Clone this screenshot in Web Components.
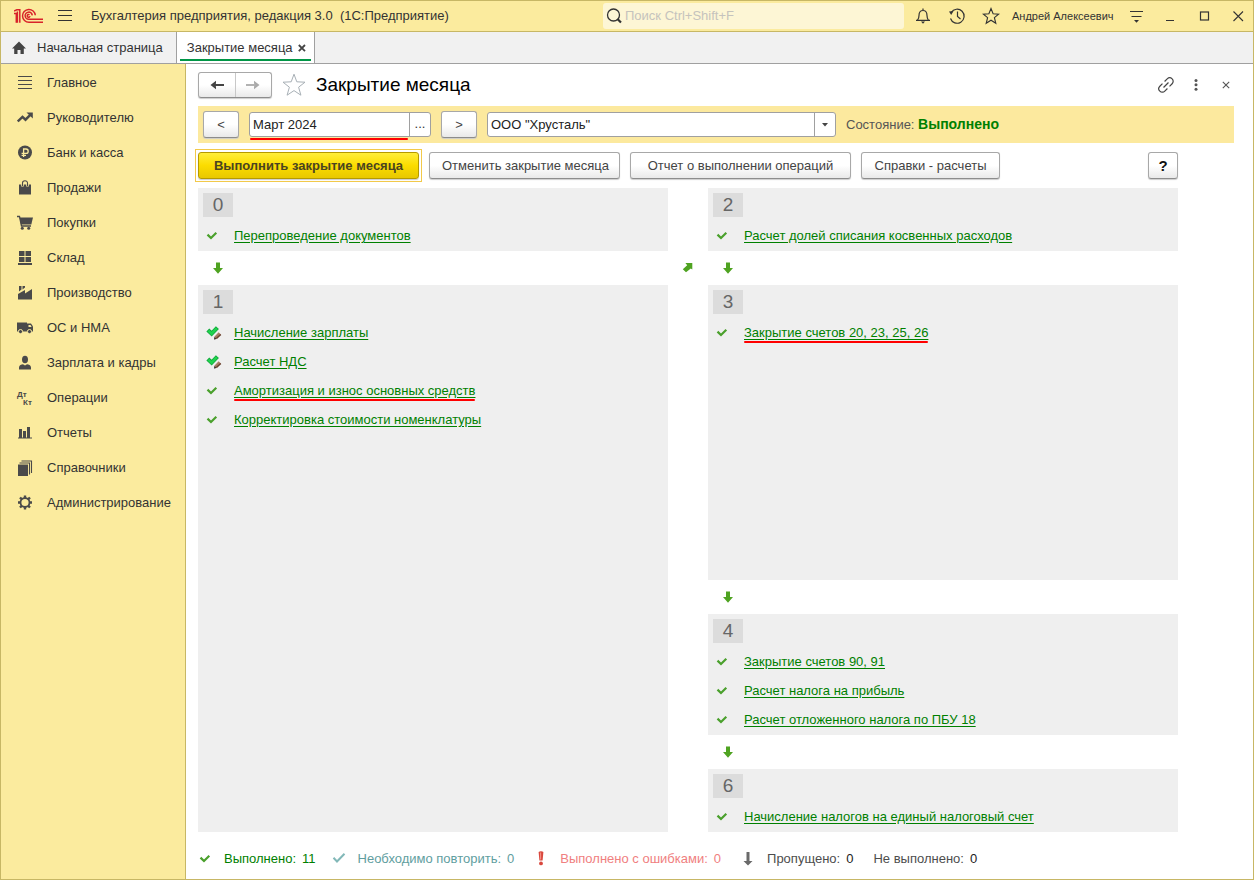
<!DOCTYPE html>
<html lang="ru">
<head>
<meta charset="utf-8">
<meta name="viewport" content="width=device-width, initial-scale=1">
<title>Закрытие месяца</title>
<style>
  body { margin: 0; font: 13px/16px "Liberation Sans", Arial, sans-serif; color: #333; background: #fff; }
</style>
</head>
<body>
<app-window>
  <title-bar slot="title" user="Андрей Алексеевич">Бухгалтерия предприятия, редакция 3.0&nbsp; (1С:Предприятие)</title-bar>
  <tab-strip slot="tabs">
    <tab-item icon="home">Начальная страница</tab-item>
    <tab-item active>Закрытие месяца</tab-item>
  </tab-strip>
  <side-nav slot="nav">
    <nav-item icon="lines">Главное</nav-item>
    <nav-item icon="trend">Руководителю</nav-item>
    <nav-item icon="ruble">Банк и касса</nav-item>
    <nav-item icon="bag">Продажи</nav-item>
    <nav-item icon="cart">Покупки</nav-item>
    <nav-item icon="store">Склад</nav-item>
    <nav-item icon="factory">Производство</nav-item>
    <nav-item icon="truck">ОС и НМА</nav-item>
    <nav-item icon="person">Зарплата и кадры</nav-item>
    <nav-item icon="dtkt">Операции</nav-item>
    <nav-item icon="chart">Отчеты</nav-item>
    <nav-item icon="books">Справочники</nav-item>
    <nav-item icon="gear">Администрирование</nav-item>
  </side-nav>
  <page-header>Закрытие месяца</page-header>
  <period-bar></period-bar>
  <command-bar>
    <ui-button kind="primary">Выполнить закрытие месяца</ui-button>
    <ui-button style="--w:191px">Отменить закрытие месяца</ui-button>
    <ui-button style="--w:221px">Отчет о выполнении операций</ui-button>
    <ui-button style="--w:139px">Справки - расчеты</ui-button>
    <ui-button slot="end" kind="help">?</ui-button>
  </command-bar>
  <stage-board>
    <stage-panel slot="left" number="0">
      <op-item>Перепроведение документов</op-item>
    </stage-panel>
    <stage-arrow slot="left"></stage-arrow>
    <stage-panel slot="left" number="1" grow>
      <op-item icon="checkEdit">Начисление зарплаты</op-item>
      <op-item icon="checkEdit">Расчет НДС</op-item>
      <op-item marked>Амортизация и износ основных средств</op-item>
      <op-item>Корректировка стоимости номенклатуры</op-item>
    </stage-panel>
    <stage-panel slot="right" number="2">
      <op-item>Расчет долей списания косвенных расходов</op-item>
    </stage-panel>
    <stage-arrow slot="right"></stage-arrow>
    <stage-panel slot="right" number="3" grow>
      <op-item marked>Закрытие счетов 20, 23, 25, 26</op-item>
    </stage-panel>
    <stage-arrow slot="right"></stage-arrow>
    <stage-panel slot="right" number="4">
      <op-item>Закрытие счетов 90, 91</op-item>
      <op-item>Расчет налога на прибыль</op-item>
      <op-item>Расчет отложенного налога по ПБУ 18</op-item>
    </stage-panel>
    <stage-arrow slot="right"></stage-arrow>
    <stage-panel slot="right" number="6">
      <op-item>Начисление налогов на единый налоговый счет</op-item>
    </stage-panel>
  </stage-board>
  <status-legend>
    <legend-item icon="check" count="11" style="--c:#008000;--n:#008000">Выполнено:</legend-item>
    <legend-item icon="checkBlue" count="0" style="--c:#5f9ea0;--n:#5f9ea0">Необходимо повторить:</legend-item>
    <legend-item icon="bang" count="0" style="--c:#f08080;--n:#f08080">Выполнено с ошибками:</legend-item>
    <legend-item icon="downGray" count="0" style="--c:#4d4d4d;--n:#222">Пропущено:</legend-item>
    <legend-item count="0" style="--c:#4d4d4d;--n:#222">Не выполнено:</legend-item>
  </status-legend>
</app-window>

<script>
const G = '#4a4a4a';
const icons = {
  logo: [30, 16, '<g fill="none" stroke="#d8232a" stroke-width="1.5"><path d="M0 5.5H2.3V14.7"/><path d="M0 3L2.8 1.7H5.8V14.7M3.4 3.5V14.7"/><path d="M21.3 7.3A6.4 6.4 0 1 0 15 14.2H29"/><path d="M18.3 7.3A3.6 3.6 0 1 0 15 11.3H29"/><path d="M16 8.2A1.4 1.4 0 1 1 15.5 6.8"/></g>'],
  menu: [16, 14, '<path d="M1 1.5H15M1 6.5H15M1 11.5H15" stroke="#333"/>'],
  search: [16, 16, '<circle cx="7.5" cy="7" r="6" fill="none" stroke="#333" stroke-width="1.3"/><path d="M11.5 11L15 14.5" stroke="#333" stroke-width="2.2"/>'],
  bell: [18, 18, '<path d="M9 1.5V3.2M2 13.3H16M3.5 13C5 11.5 5 10.5 5 8.5C5 5.5 6.5 3.5 9 3.5S13 5.5 13 8.5C13 10.5 13 11.5 14.5 13.3" fill="none" stroke="#333" stroke-width="1.2"/><path d="M7 14.5H11L9 16.8Z" fill="#333"/>'],
  history: [18, 18, '<path d="M3.2 5.5A7 7 0 1 1 2.5 11.5M9.5 4.5V9.5L12.5 12" fill="none" stroke="#333" stroke-width="1.2"/><path d="M1 4.5L5.5 4L3.2 8Z" fill="#333"/>'],
  star: [18, 18, '<path d="M9 1.5L11.1 6.8L16.6 7.2L12.4 10.7L13.8 16.3L9 13.2L4.2 16.3L5.6 10.7L1.4 7.2L6.9 6.8Z" fill="none" stroke="#333" stroke-width="1.1"/>'],
  starBig: [24, 24, '<path d="M12 1.2L14.8 8.8L23 9.2L16.6 14.2L18.9 22.2L12 17.6L5.1 22.2L7.4 14.2L1 9.2L9.2 8.8Z" fill="#fff" stroke="#a8b0b6"/>'],
  menuDown: [14, 14, '<path d="M1 2.5H14M2.5 7.5H12.5" stroke="#333" stroke-width="1.2"/><path d="M5 11H10L7.5 13.8Z" fill="#333"/>'],
  minimize: [14, 14, '<path d="M3 11.5H11" stroke="#333"/>'],
  maximize: [14, 14, '<rect x="3.5" y="3" width="8" height="8" fill="none" stroke="#333" stroke-width="1.2"/>'],
  close: [14, 14, '<path d="M2.5 2.5L12 12M12 2.5L2.5 12" stroke="#333" stroke-width="1.1"/>'],
  closeTab: [10, 10, '<path d="M1.8 2L8 8.2M8 2L1.8 8.2" stroke="#444" stroke-width="1.8"/>'],
  closePage: [10, 10, '<path d="M1.8 1.8L8.2 8.2M8.2 1.8L1.8 8.2" stroke="#555" stroke-width="1.1"/>'],
  home: [16, 14, '<path d="M8 .6L15 7.4H12.8V13H9.5V9H6.5V13H3.2V7.4H1Z" fill="#444"/>'],
  chain: [18, 18, '<g fill="none" stroke="#444" stroke-width="1.2" transform="rotate(-45 9 9)"><path d="M7.5 5.5H3.8A3.5 3.5 0 0 0 3.8 12.5H7.5M10.5 5.5H14.2A3.5 3.5 0 0 1 14.2 12.5H10.5M5.5 9H12.5"/></g>'],
  dots: [6, 14, '<g fill="#555"><circle cx="3" cy="2.4" r="1.5"/><circle cx="3" cy="6.8" r="1.5"/><circle cx="3" cy="11.2" r="1.5"/></g>'],
  back: [16, 12, '<path d="M15 6H4" stroke="#444" stroke-width="2"/><path d="M1.5 6L7 1.8V4.4L5.5 6L7 7.6V10.2Z" fill="#444"/>'],
  forward: [16, 12, '<path d="M1 6H12" stroke="#aaa" stroke-width="1.8"/><path d="M14.5 6L9 1.8V4.4L10.5 6L9 7.6V10.2Z" fill="#aaa"/>'],
  caret: [6, 4, '<path d="M0 0H6L3 3.5Z" fill="#444"/>'],
  lines: [16, 16, `<path d="M1 1.5H15M1 5.5H15M1 9.5H15M1 13.5H15" stroke="${G}"/>`],
  trend: [16, 16, `<path d="M.8 11.5L5.5 6.9L8.5 9.7L13.3 4.8" fill="none" stroke="${G}" stroke-width="2.4"/><path d="M9.5 2.5H15.8V8.6Z" fill="${G}"/>`],
  ruble: [16, 16, `<circle cx="8" cy="7.5" r="7" fill="${G}"/><path d="M6.6 12V4H9A2.2 2.2 0 0 1 9 8.4H4.6M4.6 10.3H9" fill="none" stroke="#fbeb9e" stroke-width="1.3"/>`],
  bag: [16, 16, `<path d="M2 4.5H14V14.5H2Z" fill="${G}"/><path d="M5.5 6.5V3A2.5 2.2 0 0 1 10.5 3V6.5" fill="none" stroke="#fbeb9e" stroke-width="2.6"/><path d="M5.5 6V3A2.5 2.2 0 0 1 10.5 3V6" fill="none" stroke="${G}" stroke-width="1.1"/>`],
  cart: [18, 16, `<path d="M1 1.5H3.5L5.5 11H15" fill="none" stroke="${G}" stroke-width="1.3"/><path d="M3.6 2.5H17L15.3 9.5H5Z" fill="${G}"/><circle cx="6.3" cy="13.2" r="1.5" fill="${G}"/><circle cx="12.7" cy="13.2" r="1.5" fill="${G}"/>`],
  store: [16, 16, `<path d="M2 1H7.5V6H2ZM8.5 1H14V6H8.5ZM2 7H7.5V12H2ZM8.5 7H14V12H8.5ZM1 13H15V15H1Z" fill="${G}"/>`],
  factory: [16, 16, `<path d="M1 14.5V9L8 5V8.5L15 4V14.5Z" fill="${G}"/><path d="M2 1H4.5V4.5L2 6.5ZM5.5 1H8V2.5L5.5 4.5Z" fill="${G}"/>`],
  truck: [18, 16, `<path d="M1 2.5H11V11.5H1Z" fill="${G}"/><path d="M11 3.5H15L17 6.5V11.5H11Z" fill="${G}"/><path d="M12.5 5H14.5L15.6 7H12.5Z" fill="#fbeb9e"/><g fill="${G}" stroke="#fbeb9e"><circle cx="4.5" cy="11.6" r="2.1"/><circle cx="13.5" cy="11.6" r="2.1"/></g>`],
  person: [16, 16, `<ellipse cx="8" cy="4.5" rx="3" ry="3.8" fill="${G}"/><path d="M2 14.5V12.5C2 10.3 4.5 9.5 6 9.3L8 10.5L10 9.3C11.5 9.5 14 10.3 14 12.5V14.5Z" fill="${G}"/>`],
  dtkt: [18, 16, `<g fill="${G}" font-family="Liberation Sans,Arial,sans-serif" font-weight="bold" font-size="8"><text x="1" y="6.5">Дт</text><text x="7" y="14.5">Кт</text></g>`],
  chart: [16, 16, `<path d="M2 4H5V12.5H2ZM6 6H9V12.5H6ZM10 2H13V12.5H10ZM1 12.5H15V13.5H1Z" fill="${G}"/>`],
  books: [16, 16, `<path d="M1 4.5H11V16H1Z" fill="${G}"/><path d="M2.5 3H12.5V14.5M4.5 1H14.5V13" fill="none" stroke="${G}" stroke-width="1.1"/>`],
  gear: [16, 16, `<g fill="none" stroke="${G}"><circle cx="8" cy="7.5" r="4.5" stroke-width="1.8"/><path stroke-width="2.4" d="M8 2.8V.5M8 12.2V14.5M3.3 7.5H1M12.7 7.5H15M4.7 4.2L3 2.5M11.3 10.8L13 12.5M11.3 4.2L13 2.5M4.7 10.8L3 12.5"/></g>`],
  check: [12, 10, '<path d="M1.5 3.6L5 7L10.3 1.8" fill="none" stroke="#4aa02c" stroke-width="2.2"/>'],
  checkBlue: [14, 12, '<path d="M1.5 4.8L5 8.5L12.5 .8" fill="none" stroke="#82b8b8" stroke-width="2"/>'],
  checkEdit: [16, 14, '<path d="M1.8 4L5.6 7.6L11.4 1.6" fill="none" stroke="#12a83c" stroke-width="4.2"/><path d="M2.4 4.6L5.6 7.6L10.8 2.2" fill="none" stroke="#1fd34e" stroke-width="2.6"/><path d="M12.6 6.2L15 8.4L10.6 12.8L8 13.6L8.6 10.6Z" fill="#a87c62"/><path d="M8 13.6L8.5 11L10.5 13Z" fill="#333"/><path d="M14.8 8.4L10.4 12.6" stroke="#6a4230" stroke-width="1.4"/>'],
  down: [12, 12, '<path d="M4 .5H8V6H11L6 11.8L1 6H4Z" fill="#4fa321"/>'],
  downGray: [10, 14, '<path d="M3.5 0H6.5V9H9.5L5 13.6L.5 9H3.5Z" fill="#6a6a6a"/>'],
  upRight: [12, 12, '<path d="M3.4 2H10.3V8.4L8.8 7.4L4 11.2L.8 8.2L5.2 4.2Z" fill="#4fa321"/>'],
  bang: [6, 16, '<path d="M.6 1C1.6-.1 4.4-.1 5.4 1L4.6 9.5H1.4Z" fill="#d9483e"/><circle cx="3" cy="12.4" r="1.9" fill="#d9483e"/><path d="M2.6 1.5V8.5" stroke="#f79488"/>']
};

/* Registers an element whose shadow root holds the given styles and markup. */
function define(name, css, html, setup) {
  customElements.define(name, class extends HTMLElement {
    constructor() {
      super();
      const root = this.attachShadow({ mode: 'open' });
      const t = document.createElement('template');
      t.innerHTML = `<style>*{box-sizing:border-box}:host{box-sizing:border-box;display:block}button,input,select{font:inherit;color:inherit;margin:0}.bare{border:0;background:none;padding:0;display:flex;align-items:center;justify-content:center}${css}</style>` +
        (typeof html === 'function' ? html(this) : html);
      root.append(t.content.cloneNode(true));
      if (setup) setup(this, root);
    }
  });
}
const attr = (el, n) => el.getAttribute(n) || '';

define('app-icon', ':host{display:inline-flex;flex:none}svg{display:block}', el => {
  const [w, h, body] = icons[attr(el, 'name')];
  return `<svg width="${w}" height="${h}" viewBox="0 0 ${w} ${h}" aria-hidden="true">${body}</svg>`;
});

define('ui-button', `
  button{height:27px;width:var(--w,auto);padding:0 12px;border:1px solid #a8a8a8;border-bottom-color:#8c8c8c;border-radius:3px;background:linear-gradient(#fff,#fff 50%,#e9e9e9);color:#444;box-shadow:0 1px 1px #ccc;white-space:nowrap;display:block}
  :host([kind=primary]){border:1px solid #f2c94a;padding:2px;margin:0 -3px}
  :host([kind=primary]) button{width:221px;padding:0;font-weight:bold;background:linear-gradient(#ffee3a,#fbdc00 50%,#e8c800);border-color:#b59a00;color:#4a4420}
  :host([kind=help]) button{width:30px;padding:0;font-weight:bold;font-size:15px;color:#111}
  :host([kind=step]) button{width:36px;padding:0;height:27px}
`, '<button type="button"><slot></slot></button>');

define('app-window', `
  :host{display:flex;flex-direction:column;min-height:100vh;border:1px solid #c7b765}
  .body{flex:1;display:flex}
  main{flex:1;min-width:0;display:flex;flex-direction:column;padding:0 12px}
`, '<slot name="title"></slot><slot name="tabs"></slot><div class="body"><slot name="nav"></slot><main><slot></slot></main></div>');

define('title-bar', `
  :host{background:#fbeb9e;border-bottom:1px solid #c7b765}
  header{height:30px;display:flex;align-items:center;gap:4px}
  .logo{margin:0 9px 0 13px}
  .name{flex:1;margin-left:14px;white-space:nowrap}
  .search{flex:0 1 301px;height:26px;display:flex;align-items:center;gap:3px;padding-left:3px;background:#fdf6d5;border-radius:3px}
  input{flex:1;min-width:0;border:0;padding:0;background:none;outline:0}
  input::placeholder{color:#c5c3bd;opacity:1}
  .bare{width:30px;height:28px}
  .menu{width:16px}
  .user{width:107px;padding-left:2px;font-size:11px;white-space:nowrap}
`, el => `<header><app-icon class="logo" name="logo"></app-icon>
  <button class="bare menu" aria-label="Меню"><app-icon name="menu"></app-icon></button>
  <span class="name"><slot></slot></span>
  <label class="search"><app-icon name="search"></app-icon><input type="text" aria-label="Поиск" placeholder="Поиск Ctrl+Shift+F"></label>
  <button class="bare" aria-label="Уведомления"><app-icon name="bell"></app-icon></button>
  <button class="bare" aria-label="История"><app-icon name="history"></app-icon></button>
  <button class="bare" aria-label="Избранное"><app-icon name="star"></app-icon></button>
  <span class="user">${attr(el, 'user')}</span>
  <button class="bare" aria-label="Сервис"><app-icon name="menuDown"></app-icon></button>
  <button class="bare" aria-label="Свернуть"><app-icon name="minimize"></app-icon></button>
  <button class="bare" aria-label="Развернуть"><app-icon name="maximize"></app-icon></button>
  <button class="bare" aria-label="Закрыть"><app-icon name="close"></app-icon></button></header>`);

define('tab-strip', ':host{display:flex;height:32px;background:#f1f1f1;border-bottom:1px solid #a0a0a0}', '<slot></slot>');

define('tab-item', `
  :host{display:flex;align-items:center;padding:0 13px 0 10px}
  :host([active]){padding:0 6px 0 10px;background:linear-gradient(#009646,#009646) 3px 27px/calc(100% - 6px) 2px no-repeat #fff;border:solid #a0a0a0;border-width:0 1px}
  .home{margin-right:10px}
  .tab{white-space:nowrap}
  .x{margin-left:3px;width:12px;height:16px}
`, el => (attr(el, 'icon') ? `<app-icon class="home" name="${attr(el, 'icon')}"></app-icon>` : '') +
  '<button class="bare tab"><slot></slot></button>' +
  (el.hasAttribute('active') ? '<button class="bare x" aria-label="Закрыть вкладку"><app-icon name="closeTab"></app-icon></button>' : ''));

define('side-nav', ':host{flex:0 0 185px;background:#fbeb9e;border-right:1px solid #c7b765;padding-top:1px}', '<nav><slot></slot></nav>');

define('nav-item', `
  a{display:flex;align-items:center;height:35px;padding-left:14px;color:#333;text-decoration:none;white-space:nowrap}
  .i{width:20px;margin-right:12px;display:flex;justify-content:center}
`, el => `<a href="#"><span class="i"><app-icon name="${attr(el, 'icon')}"></app-icon></span><slot></slot></a>`);

define('page-header', `
  :host{display:flex;align-items:center;height:42px}
  .nav{display:flex;height:26px;width:74px;border:1px solid #a8a8a8;border-bottom-color:#8c8c8c;border-radius:3px;background:linear-gradient(#fff,#fff 50%,#e9e9e9);box-shadow:0 1px 1px #ccc}
  .nav .bare{flex:1}
  .nav .bare+.bare{border-left:1px solid #c8c8c8}
  .star{margin:0 10px}
  h1{flex:1;margin:0;font-size:19px;line-height:24px;font-weight:normal;color:#000;white-space:nowrap}
  .act{width:30px;height:28px}
`, `<div class="nav"><button class="bare" aria-label="Назад"><app-icon name="back"></app-icon></button><button class="bare" aria-label="Вперед"><app-icon name="forward"></app-icon></button></div>
  <button class="bare star" aria-label="В избранное"><app-icon name="starBig"></app-icon></button><h1><slot></slot></h1>
  <button class="bare act" aria-label="Ссылка"><app-icon name="chain"></app-icon></button>
  <button class="bare act" aria-label="Еще"><app-icon name="dots"></app-icon></button>
  <button class="bare act" aria-label="Закрыть"><app-icon name="closePage"></app-icon></button>`);

define('period-bar', `
  :host{display:flex;align-items:center;gap:10px;height:37px;margin-right:7px;padding-left:5px;background:#fce99e}
  .field{position:relative;display:flex;height:25px;border:1px solid #a0a0a0;border-radius:3px;background:#fff}
  .date{width:182px}
  .org{flex:0 1 349px}
  input,select{flex:1;min-width:0;border:0;padding:0 3px;background:none;outline:0;appearance:none;color:#222}
  .more{width:21px;border-left:1px solid #a0a0a0;padding-bottom:2px}
  .arrow{width:21px;border-left:1px solid #a0a0a0;display:flex;align-items:center;justify-content:center}
  .mark{position:absolute;left:0;right:22px;bottom:-4px;height:2px;background:#f00;border-radius:1px}
  .state{color:#555;white-space:nowrap}
  b{color:#008000;font-size:14px}
`, `<ui-button kind="step">&lt;</ui-button>
  <div class="field date"><input type="text" aria-label="Период" value="Март 2024"><button class="bare more" aria-label="Выбрать период">...</button><span class="mark"></span></div>
  <ui-button kind="step">&gt;</ui-button>
  <div class="field org"><select aria-label="Организация"><option>ООО "Хрусталь"</option></select><span class="arrow"><app-icon name="caret"></app-icon></span></div>
  <span class="state">Состояние: <b>Выполнено</b></span>`);

define('command-bar', `
  :host{display:flex;align-items:center;gap:10px;height:45px;padding-right:63px}
  .end{margin-left:auto}
`, '<slot></slot><div class="end"><slot name="end"></slot></div>');

define('stage-board', `
  :host{flex:1;display:grid;grid-template-columns:1fr 40px 1fr;padding-right:63px}
  .col{display:flex;flex-direction:column;min-width:0}
  .mid{display:flex;justify-content:center;padding-top:73px}
`, '<div class="col"><slot name="left"></slot></div><div class="mid"><app-icon name="upRight"></app-icon></div><div class="col"><slot name="right"></slot></div>');

define('stage-arrow', ':host{display:flex;align-items:center;height:34px;padding-left:14px}', '<app-icon name="down"></app-icon>');

define('stage-panel', `
  :host{background:#efefef;padding:5px 5px 0}
  :host([grow]){flex:1}
  .n{width:30px;height:24px;margin-bottom:5px;background:#dcdcdc;color:#666;font-size:19px;line-height:24px;text-align:center}
`, el => `<div class="n">${attr(el, 'number')}</div><slot></slot>`);

define('op-item', `
  :host{display:flex;align-items:center;height:29px;padding-bottom:1px}
  .i{width:31px;padding-left:3px;display:flex}
  a{position:relative;color:#008000;text-decoration:underline;text-underline-offset:2px;white-space:nowrap}
  :host([marked]) a::after{content:"";position:absolute;left:0;right:0;bottom:-2px;height:2px;background:#f00;border-radius:1px}
`, el => `<span class="i"><app-icon name="${attr(el, 'icon') || 'check'}"></app-icon></span><a href="#"><slot></slot></a>`);

define('status-legend', ':host{display:flex;align-items:center;height:47px;padding-top:6px}', '<slot></slot>');

define('legend-item', `
  :host{display:flex;align-items:center;color:var(--c);white-space:nowrap;margin-right:20px}
  :host(:first-child){margin-right:16px}
  .i{width:14px;margin-right:12px;display:flex;justify-content:center}
  .n{margin-left:6px;color:var(--n)}
`, el => (attr(el, 'icon') ? `<span class="i"><app-icon name="${attr(el, 'icon')}"></app-icon></span>` : '') +
  `<slot></slot><span class="n">${attr(el, 'count')}</span>`);
</script>
</body>
</html>
